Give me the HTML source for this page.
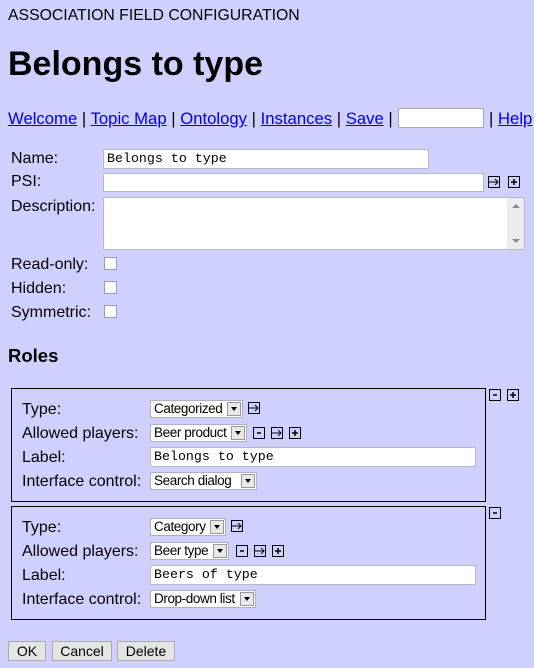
<!DOCTYPE html>
<html><head><style>
body{margin:0;width:534px;height:668px;background:#d0d0ff;font-family:"Liberation Sans",Arial,sans-serif;color:#000;position:relative;overflow:hidden}
.a{position:absolute;white-space:nowrap}
.l{font-size:16px}
.in{position:absolute;background:#fff;border:1px solid #b8b8c8;box-sizing:border-box;font-family:"Liberation Mono",monospace;font-size:13.3px;padding:2px 0 0 3px;line-height:14px}
.cb{position:absolute;width:13px;height:13px;box-sizing:border-box;border:1px solid #9a9ab0;background:#fbfbff}
.sel{position:absolute;background:#fff;border:1px solid #b0b0c0;box-sizing:border-box;height:18px;font-size:13.5px;padding:0 0 0 3px;line-height:16px;letter-spacing:-0.4px}
.sel i{position:absolute;right:1px;top:1px;width:14px;height:14px;background:#e8e8e8;border:1px solid #999;box-sizing:border-box}
.sel i:after{content:"";position:absolute;left:3px;top:4px;border-left:3px solid transparent;border-right:3px solid transparent;border-top:4px solid #000}
.ic{position:absolute;width:12px;height:12px}
a{color:#00e;text-decoration:underline}
.box{position:absolute;border:1px solid #000;box-sizing:border-box}
.btn{position:absolute;top:641px;height:20px;background:#e4e4e4;border:1px solid #aaa;box-sizing:border-box;font-size:14px;text-align:center;line-height:18px}
</style></head><body>
<div class="a" style="left:8px;top:7px;font-size:15.8px">ASSOCIATION FIELD CONFIGURATION</div>
<div class="a" style="left:8px;top:45px;font-size:34px;font-weight:bold">Belongs to type</div>
<div class="a" style="left:8px;top:109px;font-size:16.7px"><a>Welcome</a> | <a>Topic Map</a> | <a>Ontology</a> | <a>Instances</a> | <a>Save</a> |</div>
<div class="in" style="left:398px;top:108px;width:86px;height:20px;border-color:#aaa"></div>
<div class="a" style="left:489px;top:109px;font-size:16.7px">| <a>Help</a></div>

<div class="a l" style="left:11px;top:150px">Name:</div>
<div class="in" style="left:103px;top:149px;width:326px;height:20px">Belongs to type</div>
<div class="a l" style="left:11px;top:173px">PSI:</div>
<div class="in" style="left:103px;top:173px;width:381px;height:19px"></div>
<svg class="ic" style="left:488px;top:176px" viewBox="0 0 12 12"><rect x=".5" y=".5" width="11" height="11" fill="none" stroke="#000"/><path d="M1 6h9M7 3l3 3-3 3" fill="none" stroke="#000"/></svg>
<svg class="ic" style="left:508px;top:176px" viewBox="0 0 12 12"><rect x=".5" y=".5" width="11" height="11" fill="none" stroke="#000"/><path d="M3 6h6M6 3v6" stroke="#000" stroke-width="1.5"/></svg>
<div class="a l" style="left:11px;top:198px">Description:</div>
<div class="in" style="left:103px;top:197px;width:422px;height:53px"></div>
<div style="position:absolute;left:507px;top:198px;width:17px;height:51px;background:#ececf0"><div style="position:absolute;left:5px;top:6px;border-left:4px solid transparent;border-right:4px solid transparent;border-bottom:4px solid #888;width:0"></div><div style="position:absolute;left:5px;top:41px;border-left:4px solid transparent;border-right:4px solid transparent;border-top:4px solid #888;width:0"></div></div>
<div class="a l" style="left:11px;top:256px">Read-only:</div><div class="cb" style="left:104px;top:257px"></div>
<div class="a l" style="left:11px;top:280px">Hidden:</div><div class="cb" style="left:104px;top:281px"></div>
<div class="a l" style="left:11px;top:304px">Symmetric:</div><div class="cb" style="left:104px;top:305px"></div>

<div class="a" style="left:8px;top:345px;font-size:18.5px;font-weight:bold">Roles</div>

<div class="box" style="left:11px;top:388px;width:475px;height:114px"></div>
<svg class="ic" style="left:489px;top:389px" viewBox="0 0 12 12"><rect x=".5" y=".5" width="11" height="11" fill="none" stroke="#000"/><path d="M4 6h4" stroke="#000" stroke-width="1.5"/></svg>
<svg class="ic" style="left:507px;top:389px" viewBox="0 0 12 12"><rect x=".5" y=".5" width="11" height="11" fill="none" stroke="#000"/><path d="M3 6h6M6 3v6" stroke="#000" stroke-width="1.5"/></svg>
<div class="a l" style="left:22px;top:401px">Type:</div>
<div class="sel" style="left:150px;top:400px;width:93px">Categorized<i></i></div>
<svg class="ic" style="left:248px;top:402px" viewBox="0 0 12 12"><rect x=".5" y=".5" width="11" height="11" fill="none" stroke="#000"/><path d="M1 6h9M7 3l3 3-3 3" fill="none" stroke="#000"/></svg>
<div class="a l" style="left:22px;top:425px">Allowed players:</div>
<div class="sel" style="left:150px;top:424px;width:97px">Beer product<i></i></div>
<svg class="ic" style="left:253px;top:427px" viewBox="0 0 12 12"><rect x=".5" y=".5" width="11" height="11" fill="none" stroke="#000"/><path d="M4 6h4" stroke="#000" stroke-width="1.5"/></svg>
<svg class="ic" style="left:271px;top:427px" viewBox="0 0 12 12"><rect x=".5" y=".5" width="11" height="11" fill="none" stroke="#000"/><path d="M1 6h9M7 3l3 3-3 3" fill="none" stroke="#000"/></svg>
<svg class="ic" style="left:289px;top:427px" viewBox="0 0 12 12"><rect x=".5" y=".5" width="11" height="11" fill="none" stroke="#000"/><path d="M3 6h6M6 3v6" stroke="#000" stroke-width="1.5"/></svg>
<div class="a l" style="left:22px;top:449px">Label:</div>
<div class="in" style="left:150px;top:447px;width:326px;height:20px">Belongs to type</div>
<div class="a l" style="left:22px;top:473px">Interface control:</div>
<div class="sel" style="left:150px;top:472px;width:107px">Search dialog<i></i></div>

<div class="box" style="left:11px;top:506px;width:475px;height:114px"></div>
<svg class="ic" style="left:489px;top:507px" viewBox="0 0 12 12"><rect x=".5" y=".5" width="11" height="11" fill="none" stroke="#000"/><path d="M4 6h4" stroke="#000" stroke-width="1.5"/></svg>
<div class="a l" style="left:22px;top:519px">Type:</div>
<div class="sel" style="left:150px;top:518px;width:76px">Category<i></i></div>
<svg class="ic" style="left:231px;top:520px" viewBox="0 0 12 12"><rect x=".5" y=".5" width="11" height="11" fill="none" stroke="#000"/><path d="M1 6h9M7 3l3 3-3 3" fill="none" stroke="#000"/></svg>
<div class="a l" style="left:22px;top:543px">Allowed players:</div>
<div class="sel" style="left:150px;top:542px;width:79px">Beer type<i></i></div>
<svg class="ic" style="left:236px;top:545px" viewBox="0 0 12 12"><rect x=".5" y=".5" width="11" height="11" fill="none" stroke="#000"/><path d="M4 6h4" stroke="#000" stroke-width="1.5"/></svg>
<svg class="ic" style="left:254px;top:545px" viewBox="0 0 12 12"><rect x=".5" y=".5" width="11" height="11" fill="none" stroke="#000"/><path d="M1 6h9M7 3l3 3-3 3" fill="none" stroke="#000"/></svg>
<svg class="ic" style="left:272px;top:545px" viewBox="0 0 12 12"><rect x=".5" y=".5" width="11" height="11" fill="none" stroke="#000"/><path d="M3 6h6M6 3v6" stroke="#000" stroke-width="1.5"/></svg>
<div class="a l" style="left:22px;top:567px">Label:</div>
<div class="in" style="left:150px;top:565px;width:326px;height:20px">Beers of type</div>
<div class="a l" style="left:22px;top:591px">Interface control:</div>
<div class="sel" style="left:150px;top:590px;width:106px">Drop-down list<i></i></div>

<div class="btn" style="left:8px;width:38px">OK</div>
<div class="btn" style="left:52px;width:60px">Cancel</div>
<div class="btn" style="left:117px;width:58px">Delete</div>
</body></html>
